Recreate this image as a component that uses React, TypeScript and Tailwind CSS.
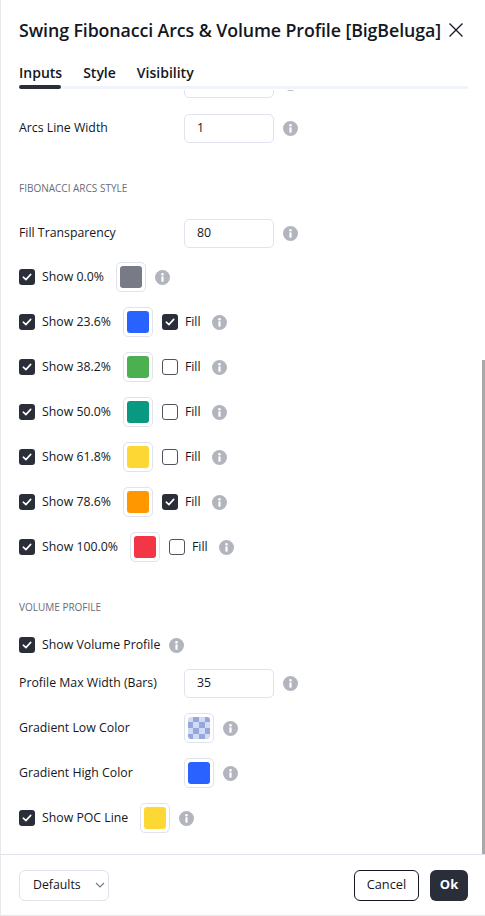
import React from "react";

const FONT = { fontFamily: '"Open Sans", "Noto Sans", sans-serif' };

function Info() {
  return (
    <svg width="15" height="15" viewBox="0 0 15 15" className="shrink-0">
      <circle cx="7.5" cy="7.5" r="7.5" fill="#b2b5be" />
      <circle cx="7.5" cy="4.2" r="1.3" fill="#fff" />
      <rect x="6.4" y="6.3" width="2.2" height="5.4" rx="0.6" fill="#fff" />
    </svg>
  );
}

function Check({ checked }: { checked: boolean }) {
  if (checked)
    return (
      <div className="w-4 h-4 rounded-[3px] bg-[#2a2e39] flex items-center justify-center shrink-0">
        <svg width="10" height="8" viewBox="0 0 10 8">
          <path d="M1.3 4.2 L3.9 6.6 L8.7 1.4" stroke="#fff" strokeWidth="1.6" fill="none" strokeLinecap="round" strokeLinejoin="round" />
        </svg>
      </div>
    );
  return <div className="w-4 h-4 rounded-[3px] border border-[#50535e] bg-white shrink-0" />;
}

function Swatch({ color, checker }: { color?: string; checker?: boolean }) {
  return (
    <div className="w-[30px] h-[30px] rounded-[5px] border border-[#e0e3eb] flex items-center justify-center shrink-0 bg-white">
      {checker ? (
        <div className="w-[22px] h-[22px] rounded-[3px] bg-[conic-gradient(#95a7dc_25%,#d3dbf3_0_50%,#95a7dc_0_75%,#d3dbf3_0)] bg-[length:12px_12px] bg-[position:-1px_-1px]" />
      ) : (
        <div className="w-[22px] h-[22px] rounded-[3px]" style={{ background: color }} />
      )}
    </div>
  );
}

function InputRow({ label, value, className = "" }: { label: string; value: string; className?: string }) {
  return (
    <div className={"flex items-center h-[29px] " + className}>
      <div className="w-[165px] text-[12.3px] text-[#131722]">{label}</div>
      <div className="w-[90px] h-[29px] rounded-[5px] border border-[#e0e3eb] flex items-center px-[12px] text-[12.3px] text-[#131722]">
        {value}
      </div>
      <div className="ml-[9px]">
        <Info />
      </div>
    </div>
  );
}

function FibRow({ label, color, fill }: { label: string; color: string; fill?: boolean }) {
  return (
    <div className="flex items-center h-[30px]">
      <Check checked />
      <span className="ml-[7px] text-[12.3px] text-[#131722]">{label}</span>
      <div className="ml-[12px]">
        <Swatch color={color} />
      </div>
      {fill !== undefined ? (
        <>
          <div className="ml-[9px]">
            <Check checked={fill} />
          </div>
          <span className="ml-[7px] text-[12.3px] text-[#131722]">Fill</span>
          <div className="ml-[11px]">
            <Info />
          </div>
        </>
      ) : (
        <div className="ml-[9px]">
          <Info />
        </div>
      )}
    </div>
  );
}

function Section({ title, className = "" }: { title: string; className?: string }) {
  return (
    <div className={"text-[10px] leading-[14px] text-[#6a6d78] uppercase " + className}>{title}</div>
  );
}

export default function App() {
  return (
    <div style={FONT} className="w-[485px] h-[916px] bg-white flex flex-col border-l border-b border-[#e9e9e9] relative overflow-hidden">
      {/* header */}
      <div className="h-[60px] flex items-center px-[18px] shrink-0">
        <div className="flex-1 text-[17.8px] font-semibold text-[#131722] tracking-[-0.1px] whitespace-nowrap">
          Swing Fibonacci Arcs &amp; Volume Profile [BigBeluga]
        </div>
        <svg width="16" height="16" viewBox="0 0 16 16" className="mr-[3px]">
          <path d="M1.5 1.5 L14.5 14.5 M14.5 1.5 L1.5 14.5" stroke="#131722" strokeWidth="1.3" />
        </svg>
      </div>
      {/* tabs */}
      <div className="shrink-0">
        <div className="flex items-center h-[24px] px-[18px] gap-[21px] text-[14px] font-semibold text-[#131722]">
          <span>Inputs</span>
          <span>Style</span>
          <span>Visibility</span>
        </div>
        <div className="flex items-center h-[6px] pl-[18px] pr-[17px]">
          <div className="w-[42px] h-[4px] rounded-full bg-[#2a2e39]" />
          <div className="flex-1 h-[3px] bg-[#f0f3fa]" />
        </div>
      </div>
      {/* content */}
      <div className="flex-1 overflow-hidden px-[18px] relative">
        <InputRow label="" value="" className="-mt-[21px]" />
        <InputRow label="Arcs Line Width" value="1" className="mt-[16px]" />
        <Section title="Fibonacci Arcs Style" className="mt-[38px]" />
        <InputRow label="Fill Transparency" value="80" className="mt-[24px]" />
        <div className="mt-[14px] flex flex-col gap-[15px]">
          <FibRow label="Show 0.0%" color="#787b86" />
          <FibRow label="Show 23.6%" color="#2962ff" fill />
          <FibRow label="Show 38.2%" color="#4caf50" fill={false} />
          <FibRow label="Show 50.0%" color="#089981" fill={false} />
          <FibRow label="Show 61.8%" color="#fdd835" fill={false} />
          <FibRow label="Show 78.6%" color="#ff9800" fill />
          <FibRow label="Show 100.0%" color="#f23645" fill={false} />
        </div>
        <Section title="Volume Profile" className="mt-[38px]" />
        <div className="mt-[19px] flex items-center h-[24px]">
          <Check checked />
          <span className="ml-[7px] text-[12.3px] text-[#131722]">Show Volume Profile</span>
          <div className="ml-[9px]">
            <Info />
          </div>
        </div>
        <InputRow label="Profile Max Width (Bars)" value="35" className="mt-[12px]" />
        <div className="mt-[15px] flex flex-col gap-[15px]">
          <div className="flex items-center h-[30px]">
            <div className="w-[165px] text-[12.3px] text-[#131722]">Gradient Low Color</div>
            <Swatch checker />
            <div className="ml-[9px]">
              <Info />
            </div>
          </div>
          <div className="flex items-center h-[30px]">
            <div className="w-[165px] text-[12.3px] text-[#131722]">Gradient High Color</div>
            <Swatch color="#2962ff" />
            <div className="ml-[9px]">
              <Info />
            </div>
          </div>
          <FibRow label="Show POC Line" color="#fdd835" />
        </div>
        <div className="absolute right-0 top-[270px] bottom-0 w-[3px] bg-[#a9a9a9]" />
      </div>
      {/* footer */}
      <div className="h-[61px] shrink-0 border-t border-[#e0e3eb] flex items-center px-[18px]">
        <div className="h-[31px] w-[90px] rounded-[6px] border border-[#e0e3eb] flex items-center pl-[13px] text-[12.3px] text-[#131722]">
          Defaults
          <svg width="10" height="6" viewBox="0 0 10 6" className="ml-[14px]">
            <path d="M1 1 L5 5 L9 1" stroke="#787b86" strokeWidth="1.2" fill="none" />
          </svg>
        </div>
        <div className="flex-1" />
        <div className="h-[31px] w-[65px] rounded-[6px] border border-[#131722] flex items-center justify-center text-[12.8px] text-[#131722]">
          Cancel
        </div>
        <div className="ml-[11px] mr-[-1px] h-[31px] w-[38px] rounded-[6px] bg-[#2a2e39] flex items-center justify-center text-[13px] font-bold text-white">
          Ok
        </div>
      </div>
    </div>
  );
}
